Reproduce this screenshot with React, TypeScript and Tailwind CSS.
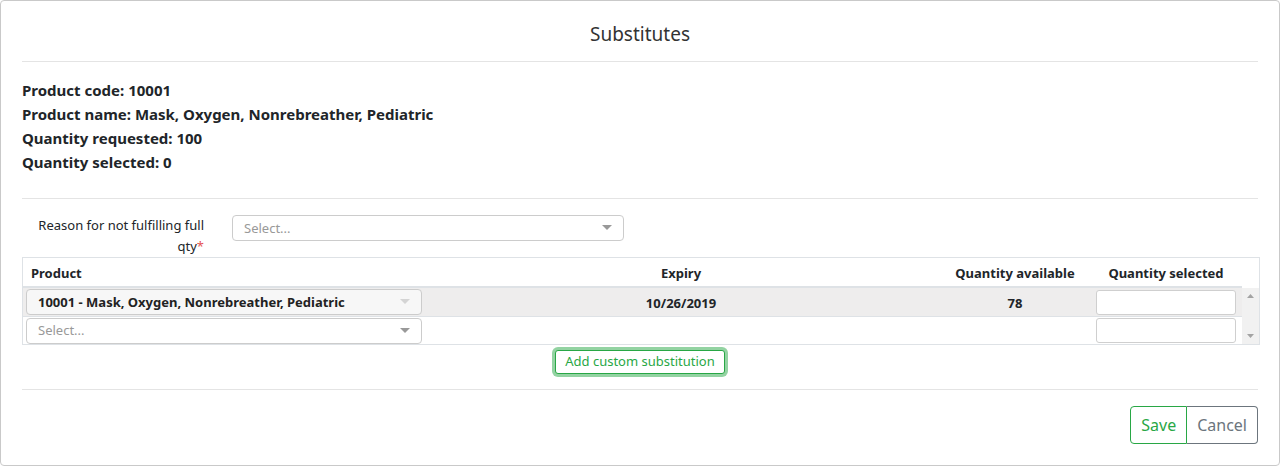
import { FC } from "react";

const Caret: FC<{ light?: boolean }> = ({ light }) => (
  <svg width="10" height="6" viewBox="0 0 10 6" className="shrink-0">
    <path d="M0 0 L10 0 L5 5 Z" fill={light ? "#d4d4d4" : "#999999"} />
  </svg>
);

const SelectBox: FC<{ value?: string; disabled?: boolean; className?: string }> = ({
  value,
  disabled,
  className,
}) => (
  <div
    className={
      "flex items-center justify-between border border-[#cccccc] rounded-[4px] pl-[11px] pr-[11px] " +
      (disabled ? "bg-[#f7f7f7] " : "bg-white ") +
      (className ?? "")
    }
  >
    {value ? (
      <span className="text-[13px] font-bold text-[#222] pt-[2px]">{value}</span>
    ) : (
      <span className="text-[13px] text-[#999] pt-[1px]">Select...</span>
    )}
    <Caret light={disabled} />
  </div>
);

export default function App() {
  return (
    <div
      className="w-[1280px] h-[466px] bg-white border border-[#c9c9c9] rounded-[4px] text-[#212529]"
      style={{ fontFamily: '"Noto Sans", "Open Sans", sans-serif' }}
    >
      <div className="mx-[21px] h-[61px] border-b border-[#e4e4e4] flex items-center justify-center">
        <h2 className="text-[19px] text-[#333] mt-[7px]">Substitutes</h2>
      </div>

      <div className="mx-[21px] pt-[16px] pb-[24px] border-b border-[#e4e4e4] text-[15px] font-bold leading-[24px]">
        <div>Product code: 10001</div>
        <div>Product name: Mask, Oxygen, Nonrebreather, Pediatric</div>
        <div>Quantity requested: 100</div>
        <div>Quantity selected: 0</div>
      </div>

      <div className="mx-[21px] border-b border-[#e4e4e4] pb-[15px]">
        <div className="flex pt-[16px] h-[58px]">
          <div className="w-[189px] text-right text-[13px] leading-[21px] pr-[7px]">
            <span>Reason for not fulfilling full</span>
            <br />
            <span>
              qty<span className="text-[#e55353]">*</span>
            </span>
          </div>
          <SelectBox className="ml-[21px] w-[392px] h-[26px]" />
        </div>

        <div className="border border-[#dee2e6] w-[1238px]">
          <div className="flex h-[30px] items-center text-[13px] font-bold">
            <div className="flex h-full items-center pt-[3px] w-[1219px] border-b-2 border-[#dee2e6]">
              <div className="w-[401px] pl-[8px]">Product</div>
              <div className="w-[514px] text-center">Expiry</div>
              <div className="w-[154px] text-center">Quantity available</div>
              <div className="w-[148px] text-center">Quantity selected</div>
            </div>
          </div>
          <div className="flex">
            <div className="w-[1219px]">
              <div className="flex h-[29px] items-center bg-[#eeeded] border-b border-[#dee2e6] text-[13px] font-bold">
                <div className="w-[401px] pl-[3px]">
                  <SelectBox value="10001 - Mask, Oxygen, Nonrebreather, Pediatric" disabled className="w-[396px] h-[26px]" />
                </div>
                <div className="w-[514px] text-center pt-[3px]">10/26/2019</div>
                <div className="w-[154px] text-center pt-[3px]">78</div>
                <div className="w-[148px] pl-[4px]">
                  <div className="w-[140px] h-[25px] bg-white border border-[#cfcfcf] rounded-[3px]" />
                </div>
              </div>
              <div className="flex h-[27px] items-center">
                <div className="w-[401px] pl-[3px]">
                  <SelectBox className="w-[396px] h-[26px]" />
                </div>
                <div className="w-[514px]" />
                <div className="w-[154px]" />
                <div className="w-[148px] pl-[4px]">
                  <div className="w-[140px] h-[25px] bg-white border border-[#cfcfcf] rounded-[3px]" />
                </div>
              </div>
            </div>
            <div className="w-[17px] bg-[#f1f1f1] flex flex-col justify-between items-center py-[6px]">
              <svg width="7" height="4" viewBox="0 0 7 4">
                <path d="M0 4 L7 4 L3.5 0 Z" fill="#a3a3a3" />
              </svg>
              <svg width="7" height="4" viewBox="0 0 7 4">
                <path d="M0 0 L7 0 L3.5 4 Z" fill="#a3a3a3" />
              </svg>
            </div>
          </div>
        </div>

        <div className="flex justify-center pt-[5px]">
          <button className="h-[24px] px-[9px] text-[13px] text-[#28a745] bg-white border border-[#28a745] rounded-[3px] ring-[3px] ring-[#28a745]/50">
            Add custom substitution
          </button>
        </div>
      </div>

      <div className="mx-[21px] flex justify-end pt-[16px]">
        <div className="flex h-[38px] text-[16px]">
          <button className="px-[10px] text-[#28a745] border border-[#28a745] rounded-l-[4px]">Save</button>
          <button className="px-[10px] text-[#6c757d] border border-l-0 border-[#6c757d] rounded-r-[4px]">Cancel</button>
        </div>
      </div>
    </div>
  );
}
